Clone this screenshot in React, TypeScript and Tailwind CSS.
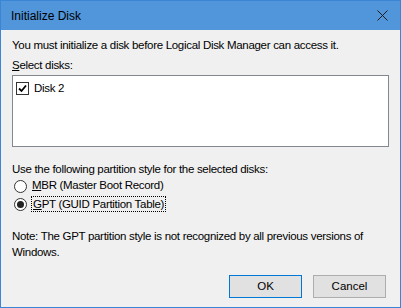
import React from 'react'

const FONT = { fontFamily: '"Liberation Sans", Arial, sans-serif' }

function Check() {
  return (
    <span className="w-[13px] h-[13px] border border-[#333] bg-white flex items-center justify-center shrink-0">
      <svg width="9" height="9" viewBox="0 0 9 9">
        <path d="M1 4.5 L3.5 7 L8 1.5" fill="none" stroke="#000" strokeWidth="1.8" />
      </svg>
    </span>
  )
}

function Radio({ on }: { on?: boolean }) {
  return (
    <span className="w-[13px] h-[13px] rounded-full border border-[#333] bg-white flex items-center justify-center shrink-0">
      {on && <span className="w-[7px] h-[7px] rounded-full bg-[#222]" />}
    </span>
  )
}

export default function App() {
  return (
    <div className="w-[401px] h-[308px] border border-[#3b85d6] bg-[#f0f0f0] flex flex-col text-[11.5px] tracking-[-0.3px] text-black" style={FONT}>
      {/* Title bar */}
      <div className="h-[29px] bg-[#5195da] flex items-center justify-between pl-[10px] pr-[12px] shrink-0">
        <span className="text-[12px] tracking-normal text-black">Initialize Disk</span>
        <svg width="11" height="11" viewBox="0 0 11 11">
          <path d="M0.5 0.5 L10.5 10.5 M10.5 0.5 L0.5 10.5" stroke="#1a1a1a" strokeWidth="1" />
        </svg>
      </div>

      <div className="flex flex-col flex-1 px-[11px] pt-[7px] pb-[9px]">
        <p className="leading-[16px] whitespace-nowrap">You must initialize a disk before Logical Disk Manager can access it.</p>
        <p className="leading-[16px] mt-[4px]"><span className="underline">S</span>elect disks:</p>
        <div className="mt-[2px] h-[72px] border border-[#828790] bg-white px-[3px] pt-[5px]">
          <div className="flex items-center gap-[5px]">
            <Check />
            <span className="leading-[14px]">Disk 2</span>
          </div>
        </div>

        <p className="leading-[16px] mt-[14px] whitespace-nowrap">Use the following partition style for the selected disks:</p>
        <div className="flex items-center gap-[5px] pl-[2px] h-[18px]">
          <Radio />
          <span><span className="underline">M</span>BR (Master Boot Record)</span>
        </div>
        <div className="flex items-center gap-[5px] pl-[2px] h-[18px]">
          <Radio on />
          <span className="border border-dotted border-black leading-[14px] px-[1px] -ml-[1px]"><span className="underline">G</span>PT (GUID Partition Table)</span>
        </div>

        <p className="leading-[16px] mt-[15px] whitespace-nowrap">Note: The GPT partition style is not recognized by all previous versions of<br />Windows.</p>

        <div className="flex justify-end gap-[11px] mt-auto pr-[3px] tracking-normal">
          <button className="w-[73px] h-[23px] border border-[#0078d7] bg-[#e1e1e1] flex items-center justify-center">OK</button>
          <button className="w-[73px] h-[23px] border border-[#adadad] bg-[#e1e1e1] flex items-center justify-center">Cancel</button>
        </div>
      </div>
    </div>
  )
}
